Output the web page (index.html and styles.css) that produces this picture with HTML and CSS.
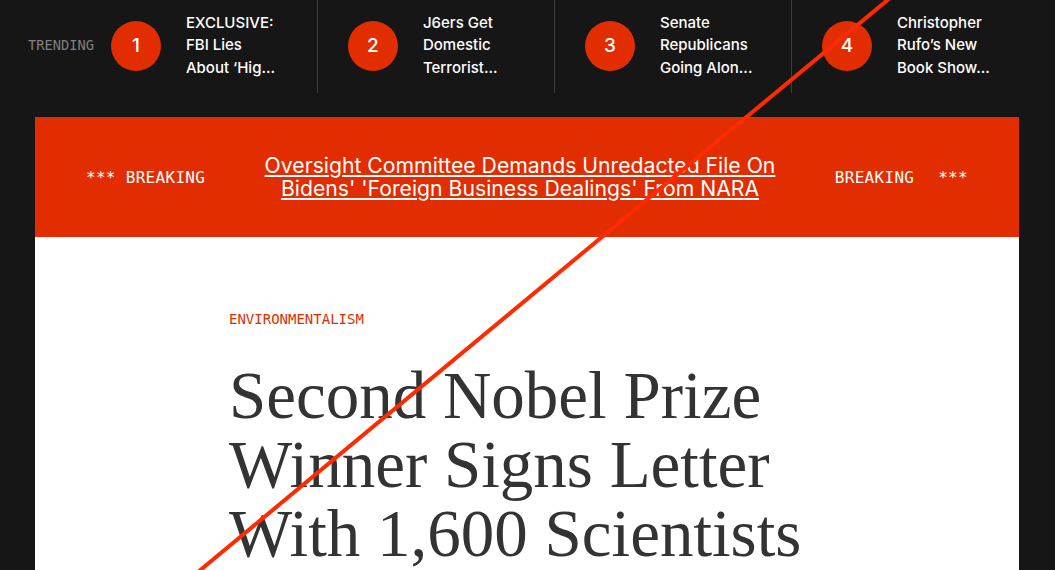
FILE: index.html
```html
<!DOCTYPE html>
<html lang="en">
<head>
    <meta charset="UTF-8">
    <meta name="viewport" content="width=device-width, initial-scale=1.0">
    <title>Second Nobel Prize Winner Signs Letter</title>
    <link rel="stylesheet" href="styles.css">
</head>
<body>
    <header class="trending">
        <span class="trending-label">TRENDING</span>
        <a class="trending-item first" href="#">
            <span class="trending-num">1</span>
            <span class="trending-title">EXCLUSIVE: FBI Lies About ‘Hig...</span>
        </a>
        <a class="trending-item" href="#">
            <span class="trending-num">2</span>
            <span class="trending-title">J6ers Get Domestic Terrorist...</span>
        </a>
        <a class="trending-item" href="#">
            <span class="trending-num">3</span>
            <span class="trending-title">Senate Republicans Going Alon...</span>
        </a>
        <a class="trending-item" href="#">
            <span class="trending-num">4</span>
            <span class="trending-title">Christopher Rufo’s New Book Show...</span>
        </a>
    </header>

    <main class="page">
        <div class="breaking">
            <span class="breaking-tag">*** BREAKING</span>
            <a class="breaking-link" href="#">Oversight Committee Demands Unredacted File On Bidens' 'Foreign Business Dealings' From NARA</a>
            <span class="breaking-tag">BREAKING <span class="stars">***</span></span>
        </div>

        <article class="article">
            <a class="category" href="#">ENVIRONMENTALISM</a>
            <h1 class="headline">Second Nobel Prize Winner Signs Letter With 1,600 Scientists</h1>
        </article>
    </main>

    <!-- red stroke laid over the whole page -->
    <svg class="slash" viewBox="0 0 1055 570" preserveAspectRatio="none">
        <line x1="890" y1="-2" x2="198" y2="572" stroke="#ff2a00" stroke-width="4"/>
    </svg>
</body>
</html>
```

FILE: styles.css
```css
body {
    margin: 0;
    background-color: #161616;
    font-family: Inter, "Noto Sans", sans-serif;
    overflow: hidden;
}

a {
    color: inherit;
    text-decoration: none;
}

/* trending bar */
.trending {
    display: flex;
    align-items: center;
    height: 93px;
    padding-left: 28px;
}

.trending-label {
    font-family: "DejaVu Sans Mono", monospace;
    font-size: 13.7px;
    color: #808080;
    margin-right: 17px;
    padding-bottom: 3px;
}

.trending-item {
    display: flex;
    align-items: center;
    box-sizing: border-box;
    width: 237px;
    height: 93px;
    padding-left: 30px;
    padding-bottom: 2px;
    border-right: 1px solid #3c3c3c;
    color: #ffffff;
}

.trending-item.first {
    width: 207px;
    padding-left: 0;
}

.trending-item:last-child {
    border-right: none;
}

.trending-num {
    flex: 0 0 50px;
    height: 50px;
    border-radius: 50%;
    background-color: #e12d00;
    display: flex;
    align-items: center;
    justify-content: center;
    font-size: 19px;
    font-weight: 500;
    margin-right: 25px;
}

.trending-title {
    width: 96px;
    font-size: 15px;
    font-weight: 500;
    line-height: 22.5px;
}

/* page */
.page {
    margin: 24px 36px 0 35px;
}

.breaking {
    display: flex;
    align-items: center;
    gap: 59px;
    height: 120px;
    padding: 0 51px;
    background-color: #e12d00;
    color: #ffffff;
}

.breaking-tag {
    flex: 0 0 auto;
    font-family: "DejaVu Sans Mono", monospace;
    font-size: 16px;
    letter-spacing: 0.3px;
    white-space: pre;
}

.breaking-tag .stars {
    margin-left: 14px;
}

.breaking-link {
    flex: 1;
    text-align: center;
    font-size: 21.2px;
    line-height: 23px;
    text-decoration: underline;
    text-decoration-thickness: 2px;
    text-underline-offset: 2px;
}

.article {
    background-color: #ffffff;
    padding: 72px 0 120px 194px;
}

.category {
    display: block;
    font-family: "DejaVu Sans Mono", monospace;
    font-size: 14px;
    line-height: 20px;
    color: #e12d00;
}

.headline {
    width: 640px;
    margin: 32px 0 0;
    font-family: "Liberation Serif", serif;
    font-size: 67px;
    font-weight: normal;
    line-height: 69px;
    color: #333333;
}

.slash {
    position: fixed;
    top: 0;
    left: 0;
    width: 1055px;
    height: 570px;
    pointer-events: none;
}
```
